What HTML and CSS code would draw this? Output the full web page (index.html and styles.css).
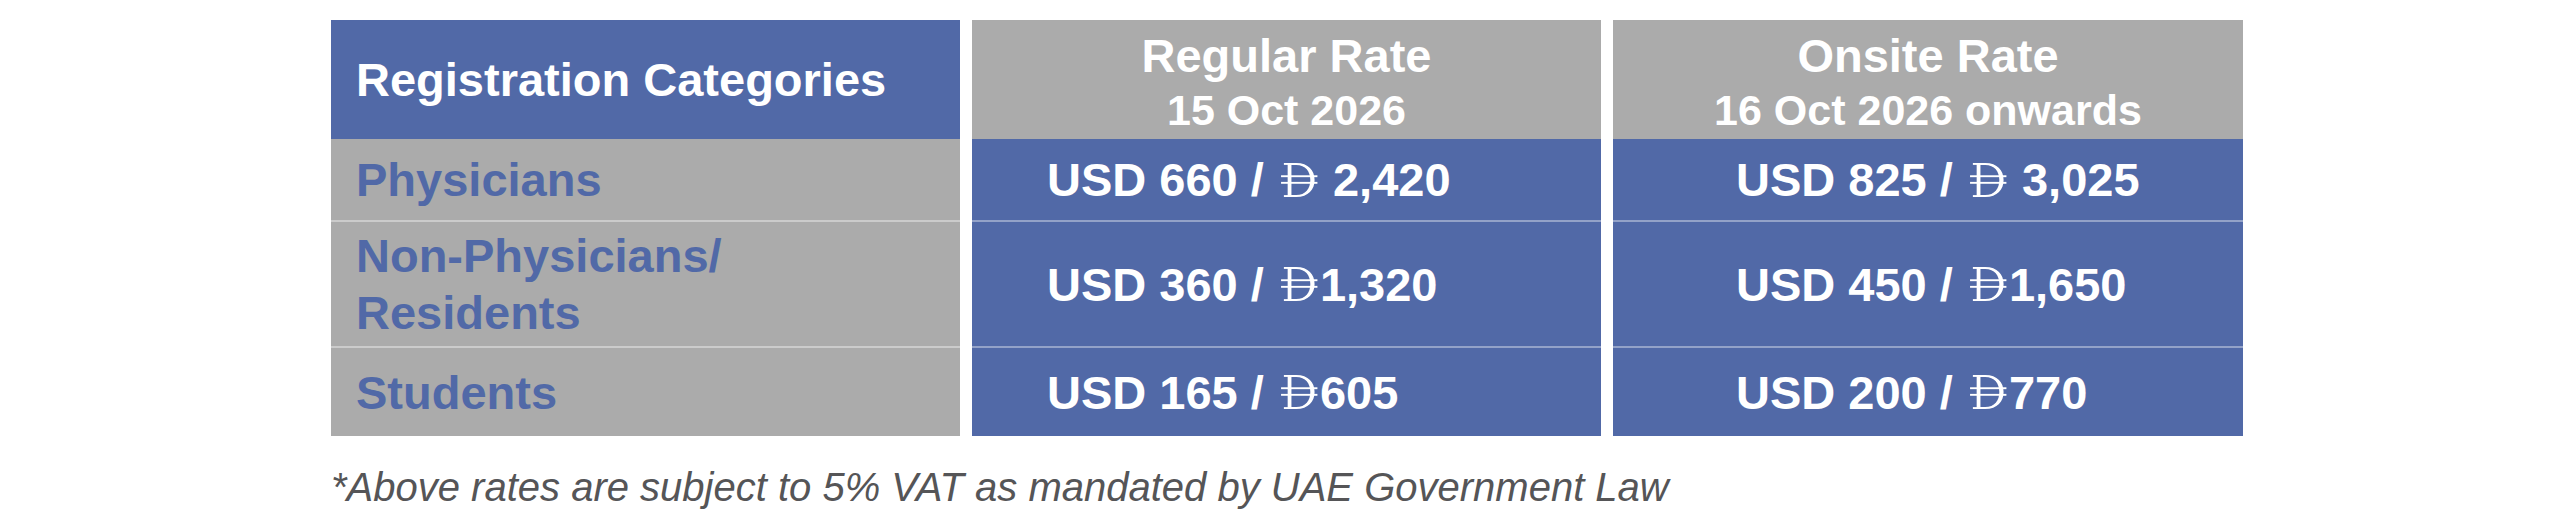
FILE: index.html
```html
<!DOCTYPE html>
<html lang="en">
<head>
<meta charset="utf-8">
<title>Registration Rates</title>
<link rel="stylesheet" href="styles.css">
</head>
<body>
<div class="page">
  <div class="rates">
    <div class="cell head cat-head">Registration Categories</div>
    <div class="cell head rate-head"><span class="t1">Regular Rate</span><span class="t2">15 Oct 2026</span></div>
    <div class="cell head rate-head"><span class="t1">Onsite Rate</span><span class="t2">16 Oct 2026 onwards</span></div>

    <div class="cell cat">Physicians</div>
    <div class="cell price col2">USD 660 / <svg class="dh" viewBox="0 0 40 36"><use href="#dirham"/></svg> 2,420</div>
    <div class="cell price col3">USD 825 / <svg class="dh" viewBox="0 0 40 36"><use href="#dirham"/></svg> 3,025</div>

    <div class="cell cat sep">Non-Physicians/<br>Residents</div>
    <div class="cell price col2 sep">USD 360 / <svg class="dh" viewBox="0 0 40 36"><use href="#dirham"/></svg>1,320</div>
    <div class="cell price col3 sep">USD 450 / <svg class="dh" viewBox="0 0 40 36"><use href="#dirham"/></svg>1,650</div>

    <div class="cell cat sep">Students</div>
    <div class="cell price col2 sep">USD 165 / <svg class="dh" viewBox="0 0 40 36"><use href="#dirham"/></svg>605</div>
    <div class="cell price col3 sep">USD 200 / <svg class="dh" viewBox="0 0 40 36"><use href="#dirham"/></svg>770</div>
  </div>
  <p class="note">*Above rates are subject to 5% VAT as mandated by UAE Government Law</p>
</div>
<svg class="defs" width="0" height="0" aria-hidden="true">
  <defs>
    <g id="dirham" fill="currentColor">
      <path fill-rule="evenodd" d="M8 0 H17 C30 0 36.5 8 36.5 18 C36.5 28 30 36 17 36 H8 Z M12 2 H17 C27 2 32 9 32 18 C32 27 27 34 17 34 H12 Z"/>
      <rect x="4" y="0" width="5" height="2"/>
      <rect x="4" y="34" width="5" height="2"/>
      <rect x="1" y="13" width="38.5" height="2"/>
      <rect x="1" y="20" width="38.5" height="2"/>
    </g>
  </defs>
</svg>
</body>
</html>
```

FILE: styles.css
```css
html, body {
  margin: 0;
  padding: 0;
  background: #ffffff;
}

body {
  font-family: "Liberation Sans", Arial, Helvetica, sans-serif;
}

.page {
  padding: 20px 0 0 331px;
}

.rates {
  display: grid;
  grid-template-columns: 629px 629px 630px;
  grid-template-rows: 119px 81px 126px 90px;
  column-gap: 12px;
}

.cell {
  display: flex;
  align-items: center;
  box-sizing: border-box;
  font-weight: bold;
  font-size: 47px;
  line-height: 57px;
}

.head {
  color: #ffffff;
}

.cat-head {
  background: #5169a7;
  padding-left: 25px;
}

.rate-head {
  background: #ababab;
  flex-direction: column;
  justify-content: center;
  padding-top: 7px;
}

.t1 {
  font-size: 47px;
  line-height: 54px;
}

.t2 {
  font-size: 43px;
  line-height: 54px;
}

.cat {
  background: #ababab;
  color: #5169a7;
  padding-left: 25px;
}

.price {
  background: #5169a7;
  color: #ffffff;
  white-space: pre;
}

.col2 {
  padding-left: 75px;
}

.col3 {
  padding-left: 123px;
}

.sep {
  border-top: 2px solid rgba(255, 255, 255, 0.38);
}

.dh {
  width: 38px;
  height: 34px;
  margin: 0 2px 0 3px;
  color: #ffffff;
}

.defs {
  position: absolute;
  width: 0;
  height: 0;
  overflow: hidden;
}

.note {
  margin: 27px 0 0 0;
  font-style: italic;
  font-size: 40px;
  line-height: 48px;
  color: #555557;
}
```
